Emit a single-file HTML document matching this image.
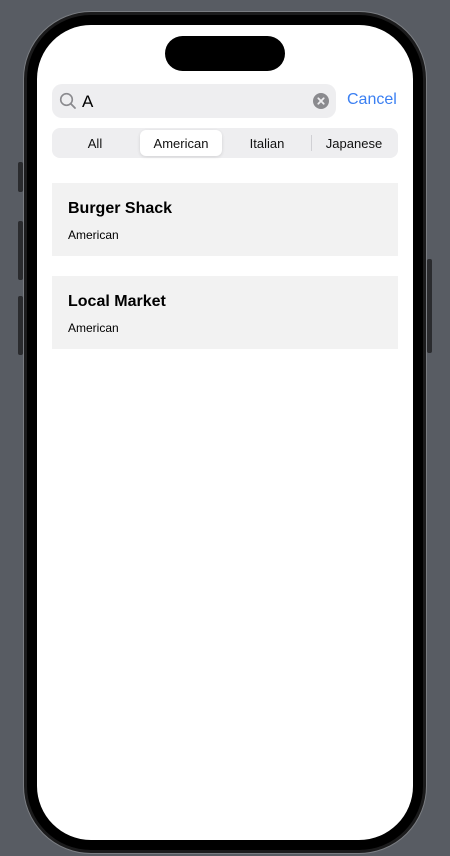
<!DOCTYPE html>
<html><head><style>
*{margin:0;padding:0;box-sizing:border-box}
body{width:450px;height:856px;background:#585c63;position:relative;overflow:hidden;font-family:"Liberation Sans",sans-serif}
.btn{position:absolute;background:#2a2b2e;border-radius:2px}
.outer{position:absolute;left:23px;top:11px;width:404px;height:843px;border-radius:68px;background:#1b1b1c;border:1px solid #7a7d82}
.bezel{position:absolute;left:27px;top:15px;width:396px;height:835px;border-radius:64px;background:#000}
.screen{position:absolute;left:37px;top:25px;width:376px;height:815px;border-radius:54px;background:#fff;overflow:hidden}
.island{position:absolute;left:165px;top:36px;width:120px;height:35px;border-radius:18px;background:#000}
.search{position:absolute;left:52px;top:84px;width:284px;height:34px;border-radius:10px;background:#eeeef0}
.cancel{position:absolute;left:347px;top:91px;font-size:16px;color:#3a7ff2}
.seg{position:absolute;left:52px;top:128px;width:346px;height:30px;border-radius:8px;background:#eeeef0}
.seg span{position:absolute;top:8px;font-size:13px;color:#111;width:86px;text-align:center}
.sel{position:absolute;left:88px;top:2px;width:82px;height:26px;background:#fff;border-radius:6px;box-shadow:0 1px 3px rgba(0,0,0,.12)}
.card{position:absolute;left:52px;width:346px;height:73px;background:#f2f2f2}
.card b{position:absolute;left:16px;top:17px;font-size:16px;color:#000}
.card i{position:absolute;left:16px;top:45px;font-size:12px;font-style:normal;color:#000}
</style></head><body>
<div class="btn" style="left:18px;top:162px;width:5px;height:30px"></div>
<div class="btn" style="left:18px;top:221px;width:5px;height:59px"></div>
<div class="btn" style="left:18px;top:296px;width:5px;height:59px"></div>
<div class="btn" style="left:427px;top:259px;width:5px;height:94px"></div>
<div class="outer"></div><div class="bezel"></div>
<div class="screen"></div>
<div class="island"></div>
<div class="search">
<svg style="position:absolute;left:7px;top:8px" width="18" height="18" viewBox="0 0 18 18"><circle cx="7.5" cy="7.5" r="5.8" fill="none" stroke="#8a8a8e" stroke-width="1.6"/><line x1="11.8" y1="11.8" x2="16" y2="16" stroke="#8a8a8e" stroke-width="1.8" stroke-linecap="round"/></svg>
<span style="position:absolute;left:30px;top:8px;font-size:17px;color:#000">A</span>
<svg style="position:absolute;left:261px;top:9px" width="16" height="16" viewBox="0 0 16 16"><circle cx="8" cy="8" r="8" fill="#8a8a8e"/><path d="M5.3 5.3L10.7 10.7M10.7 5.3L5.3 10.7" stroke="#eeeef0" stroke-width="1.8" stroke-linecap="round"/></svg>
</div>
<div class="cancel">Cancel</div>
<div class="seg"><div class="sel"></div>
<span style="left:0">All</span><span style="left:86px">American</span><span style="left:172px">Italian</span><span style="left:259px">Japanese</span>
<div style="position:absolute;left:259px;top:7px;width:1px;height:16px;background:#d0d0d4"></div></div>
<div class="card" style="top:183px"><b>Burger Shack</b><i>American</i></div>
<div class="card" style="top:276px"><b>Local Market</b><i>American</i></div>
</body></html>
